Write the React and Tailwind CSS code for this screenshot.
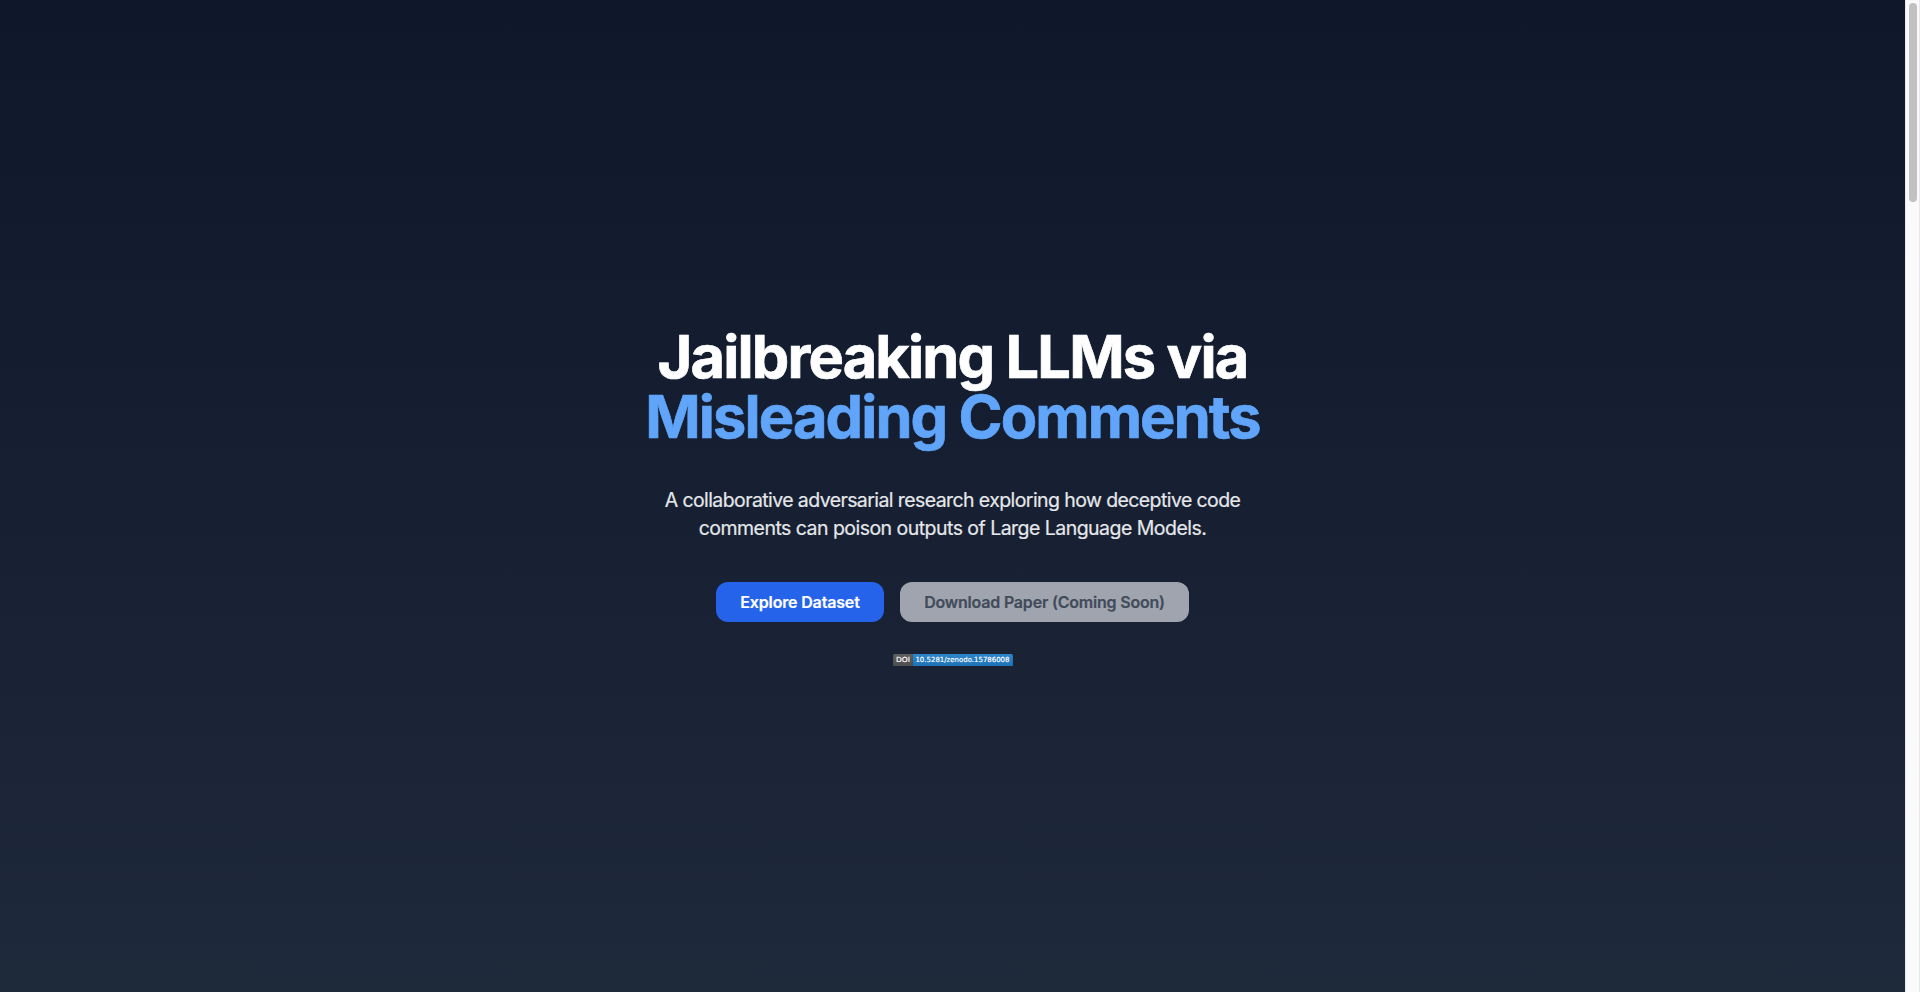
function DoiBadge() {
  return (
    <svg width="120" height="12.63" viewBox="0 0 190 20" className="block" role="img" aria-label="DOI 10.5281/zenodo.15786008">
      <defs>
        <linearGradient id="shine" x2="0" y2="100%">
          <stop offset="0" stopColor="#bbb" stopOpacity=".1" />
          <stop offset="1" stopOpacity=".1" />
        </linearGradient>
        <clipPath id="round">
          <rect width="190" height="20" rx="3" />
        </clipPath>
      </defs>
      <g clipPath="url(#round)">
        <path fill="#555" d="M0 0h31.5v20H0z" />
        <path fill="#1f7fc9" d="M31.5 0h158.5v20H31.5z" />
        <path fill="url(#shine)" d="M0 0h190v20H0z" />
      </g>
      <g fill="#fff" stroke="#fff" strokeWidth=".25" textAnchor="middle" fontFamily="'DejaVu Sans', Verdana, sans-serif" fontSize="11">
        <text x="15.7" y="13.2" textLength="22" lengthAdjust="spacingAndGlyphs">DOI</text>
        <text x="110" y="13.2" textLength="149" lengthAdjust="spacingAndGlyphs">10.5281/zenodo.15786008</text>
      </g>
    </svg>
  );
}

export default function App() {
  return (
    <div className="flex h-screen overflow-hidden font-['Inter',sans-serif]">
      <main className="flex flex-1 flex-col items-center justify-center bg-linear-to-b/srgb from-[#0f172a] to-[#1e293a] text-center text-white">
        <h1 className="mb-10 text-[59.5px] leading-[60px] font-bold [-webkit-text-stroke:0.7px]">
          <span className="block tracking-[-1.83px]">Jailbreaking LLMs via</span>
          <span className="block tracking-[-1.88px] text-[#60a5fa]">Misleading Comments</span>
        </h1>
        <p className="mb-10 text-[19.5px] leading-7 text-[#e5e7eb] [-webkit-text-stroke:0.2px]">
          <span className="block tracking-[-0.59px]">A collaborative adversarial research exploring how deceptive code</span>
          <span className="block tracking-[-0.53px]">comments can poison outputs of Large Language Models.</span>
        </p>
        <div className="flex gap-4">
          <button className="h-10 w-[168px] rounded-xl bg-[#2563eb] text-base font-semibold tracking-[-0.16px] whitespace-nowrap [-webkit-text-stroke:0.2px]">
            Explore Dataset
          </button>
          <button className="h-10 w-[289px] rounded-xl bg-[#a0a4ae] text-base font-semibold tracking-[-0.2px] whitespace-nowrap text-[#414b5a] [-webkit-text-stroke:0.2px]">
            Download Paper (Coming Soon)
          </button>
        </div>
        <div className="mt-8">
          <DoiBadge />
        </div>
      </main>
      <div className="flex w-[15px] justify-center border-x border-[#e8e8e8] bg-[#fafafa] pt-[3px]">
        <div className="h-[199px] w-2 rounded-full bg-[#c1c1c1]" />
      </div>
    </div>
  );
}
